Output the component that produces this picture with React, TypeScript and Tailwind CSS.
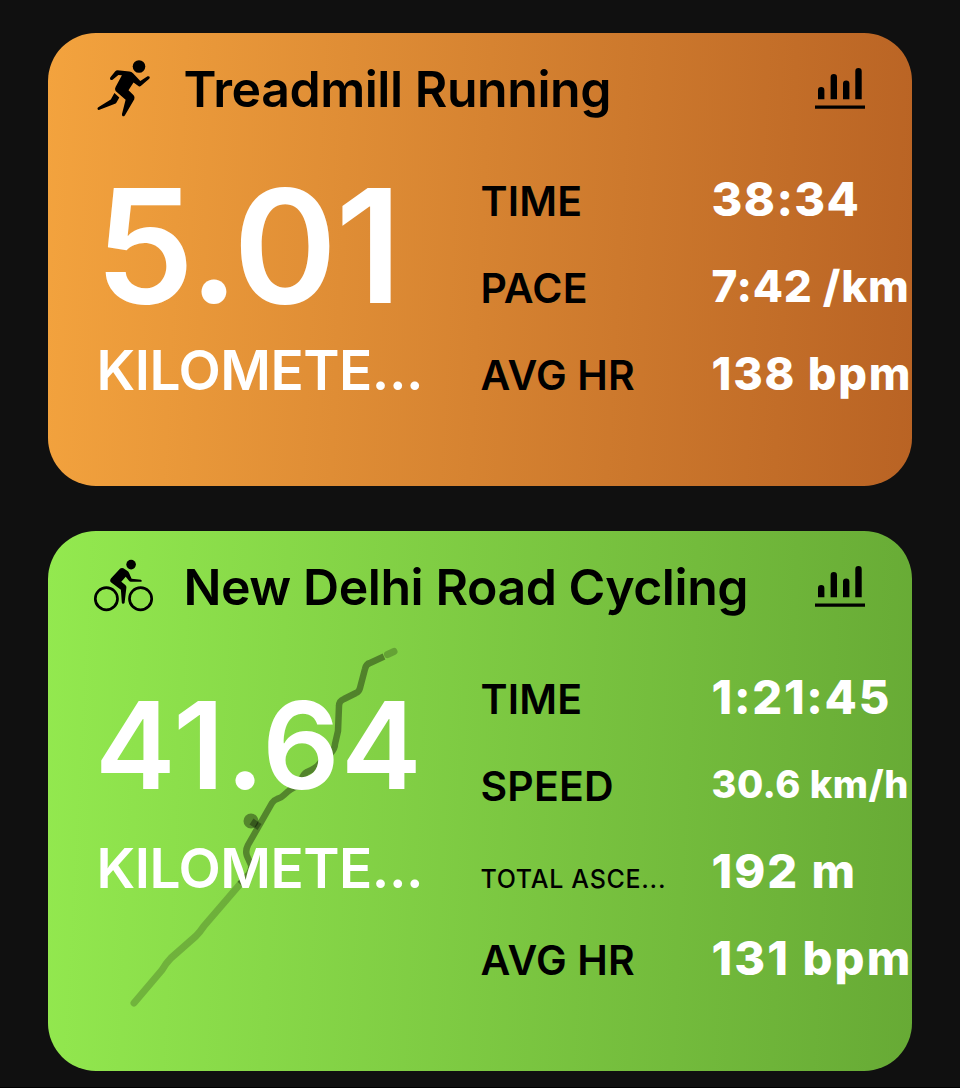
import type { ReactNode } from "react";

type Metric = { label: string; value: string; labelClass?: string; valueClass?: string };

function RunnerIcon() {
  return (
    <svg viewBox="0 0 100 80" className="h-20 w-[100px]" fill="#000">
      <circle cx="59" cy="16.5" r="6.3" />
      <path d="M37.5 20.3 49.5 21.4Q51.5 21.6 53 23.2L60.3 31 67.6 26.3Q69.2 25.8 69.7 27.1 69.9 28 69.2 28.8L60.8 36.1Q59.6 37 58.4 36L53.5 32.6 48.5 40.2 53.6 45.3Q55 47 54.3 49.2L44.8 65.4Q43.6 66.7 42.5 66 41.8 65.2 42 63.9L45.6 49.8 35.6 41Q34.3 39.2 35.6 37L41.9 25.3 38.4 24.9 32.6 29.8Q31.3 30.4 30.3 29.5 29.6 28.6 30.4 27.2L35.3 21.3Q36.2 20.3 37.5 20.3Z" />
      <path d="M34.4 43 39.3 47.6 36.5 52.4Q35.8 53.5 34.4 54.1L19.5 59.8Q18 60.3 17.5 59 17.3 57.9 18.3 57.3L30.8 49.5Z" />
    </svg>
  );
}

function CyclistIcon() {
  return (
    <svg viewBox="0 0 100 80" className="-mt-[3px] h-20 w-[100px]" fill="#000">
      <g fill="none" stroke="#000" strokeWidth="2.7">
        <circle cx="26.4" cy="53.7" r="11.1" />
        <circle cx="60.6" cy="53.7" r="11.1" />
      </g>
      <circle cx="51.1" cy="19.6" r="4.8" />
      <path d="M40.2 23.6Q41.7 22.4 43.4 23.3L47.5 26Q48.5 26.7 49.1 28L51.6 33.7 61 34.7Q62 35.2 61.7 36.2 61.5 36.8 60.5 36.8L50.8 36.7Q49.7 36.7 49 35.7L45.7 31.7 41.3 36.8 45.3 39.9Q46.6 41 46.4 42.6L44.6 57.8Q44.2 58.8 43.1 58.8 41.8 58.7 41.8 57.5L40.9 44.8 31.2 37.6Q29.3 35.9 30.9 33.5Z" />
    </svg>
  );
}

function ChartIcon() {
  return (
    <svg viewBox="0 0 50 42" className="h-[42px] w-[50px]" fill="none" stroke="#000">
      <path d="M3 31.3V22.2a3.2 3.2 0 0 1 6.4 0V31.3ZM15.6 31.3V9.2a3.2 3.2 0 0 1 6.4 0V31.3ZM28 31.3V15.6a3.2 3.2 0 0 1 6.4 0V31.3ZM40.3 31.3V3.2a3.2 3.2 0 0 1 6.4 0V31.3Z" fill="#000" stroke="none" />
      <path d="M0 39.2H50" strokeWidth="3.3" />
    </svg>
  );
}

function RouteMap() {
  return (
    <svg viewBox="0 0 300 380" className="absolute top-[104px] left-[62px] h-[380px] w-[300px]" fill="none" strokeLinejoin="round">
      <path d="M24 368L52 335Q56 328 61 323L86 301Q90 297 94 291L131 248" stroke="#000" strokeOpacity=".2" strokeWidth="7" strokeLinecap="round" />
      <path d="M130 249L139 239Q142 234 141 230L137 221Q135 216 138 210L162 168Q164 165 167 164 171 163 174 160 181 153 188 151 190 150 191 146 193 139 197 137 207 133 210 128L220 119Q225 114 225 109L228 96 229 71Q229 66 234 64L246 58Q249 57 250 53L255 34Q256 29 260 28L274 21.5" stroke="#000" strokeOpacity=".38" strokeWidth="6.5" />
      <path d="M277.5 19.5L284 16.5" stroke="#000" strokeOpacity=".22" strokeWidth="7" strokeLinecap="round" />
      <circle cx="141" cy="186" r="7.5" fill="#000" fillOpacity=".38" />
      <path d="M141.5 186.5L149.5 192" stroke="#000" strokeOpacity=".34" strokeWidth="7" />
    </svg>
  );
}

type CardProps = {
  title: string;
  icon: ReactNode;
  distance: string;
  distanceClass: string;
  className: string;
  metrics: Metric[];
  children?: ReactNode;
};

function WorkoutCard({ title, icon, distance, distanceClass, className, metrics, children }: CardProps) {
  return (
    <section className={`relative shrink-0 overflow-hidden rounded-[48px] ${className}`}>
      {children}
      <header className="relative flex h-[125px] items-start pr-[47px] pl-8">
        <div className="mt-[17px] w-[103.5px] shrink-0">{icon}</div>
        <h2 className="h-[112px] flex-1 text-[50px] leading-[112px] font-[590] tracking-[-0.45px] text-black">{title}</h2>
        <div className="mt-[35px]">
          <ChartIcon />
        </div>
      </header>
      <div className="relative flex whitespace-nowrap">
        <div className="w-[433px] shrink-0 pl-[47px] text-white">
          <div className={`h-[176px] font-semibold ${distanceClass}`}>{distance}</div>
          <div className="h-[72px] pl-[1.5px] text-[55px] leading-[72px] font-[560] tracking-[-0.5px]">KILOMETE...</div>
        </div>
        <dl className="-ml-[0.5px] flex-1">
          {metrics.map((m) => (
            <div key={m.label} className="flex h-[87px]">
              <dt className={`w-[231px] shrink-0 text-black ${m.labelClass ?? "text-[41px] leading-[87px] font-[560] tracking-[0.2px]"}`}>{m.label}</dt>
              <dd className={`font-extrabold text-white ${m.valueClass ?? "text-[47px] leading-[82px] tracking-[1.4px]"}`}>{m.value}</dd>
            </div>
          ))}
        </dl>
      </div>
    </section>
  );
}

export default function App() {
  return (
    <main className="flex h-[1088px] w-[960px] flex-col gap-[45px] overflow-hidden border-b border-black bg-[#101010] px-12 pt-[33px] font-['Inter',sans-serif]">
      <WorkoutCard
        title="Treadmill Running"
        icon={<RunnerIcon />}
        distance="5.01"
        distanceClass="text-[158px] leading-[176px] tracking-[-1.8px]"
        className="h-[453px] bg-linear-[93deg] from-[#f3a33e] to-[#b96324]"
        metrics={[
          { label: "TIME", value: "38:34" },
          { label: "PACE", value: "7:42 /km", valueClass: "text-[44px] leading-[82px] tracking-[0.7px]" },
          { label: "AVG HR", value: "138 bpm", valueClass: "text-[45px] leading-[84px] tracking-[1.8px]" },
        ]}
      />
      <WorkoutCard
        title="New Delhi Road Cycling"
        icon={<CyclistIcon />}
        distance="41.64"
        distanceClass="text-[121px] leading-[178px] tracking-[1.4px]"
        className="h-[540px] bg-linear-[93deg] from-[#93e94f] to-[#67aa35]"
        metrics={[
          { label: "TIME", value: "1:21:45", valueClass: "text-[47px] leading-[82px] tracking-[1.7px]" },
          { label: "SPEED", value: "30.6 km/h", valueClass: "text-[38px] leading-[82px] tracking-[0.5px]" },
          { label: "TOTAL ASCE...", value: "192 m", labelClass: "text-[25px] leading-[98px] font-[540] tracking-[0.7px]", valueClass: "text-[47px] leading-[82px] tracking-[2px]" },
          { label: "AVG HR", value: "131 bpm", valueClass: "text-[47px] leading-[82px] tracking-[2.1px]" },
        ]}
      >
        <RouteMap />
      </WorkoutCard>
    </main>
  );
}
